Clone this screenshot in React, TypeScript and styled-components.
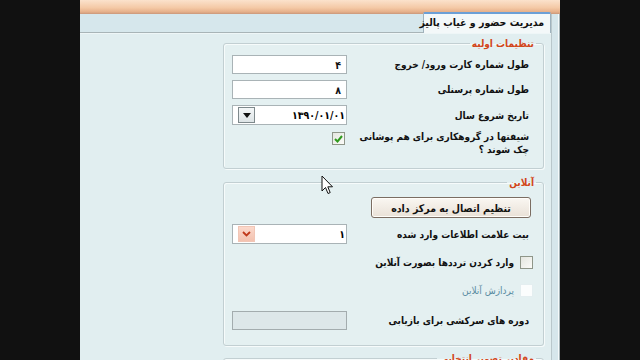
import React from 'react';
import styled, { createGlobalStyle } from 'styled-components';

const GlobalStyle = createGlobalStyle`
  html, body {
    margin: 0;
    padding: 0;
    background: #111;
  }
  * {
    box-sizing: border-box;
  }
`;

const FONT = `"DejaVu Sans Condensed", "DejaVu Sans", sans-serif`;

const Screen = styled.div`
  width: 640px;
  height: 360px;
  display: flex;
  justify-content: center;
  background: #111;
  overflow: hidden;
`;

const Window = styled.div`
  position: relative;
  width: 480px;
  height: 360px;
  display: flex;
  flex-direction: column;
  background: #e1eef0;
  font-family: ${FONT};
  overflow: hidden;
`;

const TitleBar = styled.div`
  height: 14px;
  flex: none;
  background: linear-gradient(#fbe2cc 0%, #f4c9a6 55%, #e6b08a 85%, #c9977a 100%);
`;

const Body = styled.div`
  flex: 1;
  display: flex;
  direction: rtl;
  min-height: 0;
`;

const RightEdge = styled.div`
  width: 9px;
  flex: none;
  background: #d6e6eb;
  border-right: 1px solid #a6b3b7;
  border-left: 1px solid #b9c7cb;
  box-shadow: inset -1px 0 0 #f4f9fa;
`;

const Main = styled.div`
  flex: 1;
  display: flex;
  flex-direction: column;
  min-width: 0;
`;

const TabStrip = styled.div`
  height: 19px;
  flex: none;
  display: flex;
  align-items: flex-end;
  background: #d6e7ec;
  border-bottom: 1px solid #a8b4b7;
  box-shadow: 0 1px 0 #eef6f7;
`;

const Tab = styled.div`
  width: 128px;
  height: 21px;
  margin-bottom: -1px;
  background: #f3f8f9;
  border: 1px solid #9fb2bd;
  border-top: 2px solid #6b9fd6;
  border-bottom: none;
  border-radius: 2px 2px 0 0;
  font-size: 10.5px;
  font-weight: bold;
  color: #111;
  padding: 2px 6px 0 0;
  white-space: nowrap;
`;

const Content = styled.div`
  flex: 1;
  display: flex;
  flex-direction: column;
  align-items: flex-start;
  padding: 4px 7px 0 0;
`;

const Group = styled.fieldset<{ $top?: number; $bottom?: number }>`
  width: 321px;
  min-width: 0;
  margin: ${(p) => p.$top ?? 0}px 0 0 0;
  padding: 0 14px ${(p) => p.$bottom ?? 12}px 8px;
  border: 1px solid #c2cfd2;
  border-radius: 3px;
  box-shadow: inset 1px 1px 0 #f6fbfb, 1px 1px 0 #f6fbfb;
  background: #e4f0f1;
  flex: none;
`;

const Legend = styled.legend`
  margin-right: -7px;
  padding: 0 2px;
  font-size: 10px;
  font-weight: bold;
  line-height: 13px;
  color: #d2461a;
`;

const Row = styled.div<{ $top?: number; $align?: string }>`
  display: grid;
  grid-template-columns: minmax(0, 1fr) 115px;
  align-items: ${(p) => p.$align ?? 'center'};
  margin-top: ${(p) => p.$top ?? 0}px;
`;

const Label = styled.div<{ $muted?: boolean }>`
  font-size: 10px;
  font-weight: ${(p) => (p.$muted ? 'normal' : 'bold')};
  line-height: 13px;
  color: ${(p) => (p.$muted ? '#5b8ca2' : '#111')};
  text-align: right;
  white-space: nowrap;
`;

const TextBox = styled.div<{ $disabled?: boolean }>`
  height: 19px;
  border: 1px solid ${(p) => (p.$disabled ? '#a3acae' : '#a9b3b6')};
  background: ${(p) => (p.$disabled ? '#dde7e9' : '#fff')};
  font-size: 10.5px;
  font-weight: bold;
  color: #111;
  display: flex;
  align-items: center;
  padding: 0 5px;
  direction: rtl;
`;

const Combo = styled.div`
  height: 20px;
  border: 1px solid #a9b3b6;
  background: #fff;
  display: flex;
  align-items: center;
  justify-content: space-between;
  padding: 0 1px 0 5px;
  direction: rtl;
  font-size: 10.5px;
  font-weight: bold;
`;

const DropButton = styled.div<{ $tone: 'grey' | 'pink' }>`
  width: 17px;
  height: 16px;
  display: flex;
  align-items: center;
  justify-content: center;
  border: 1px solid ${(p) => (p.$tone === 'grey' ? '#7e898c' : '#f1c6b6')};
  background: ${(p) => (p.$tone === 'grey' ? 'linear-gradient(#f4f7f8, #dde4e6)' : 'linear-gradient(#fbd9cc, #f3c2b0)')};
`;

const Check = styled.div<{ $muted?: boolean }>`
  width: 13px;
  height: 13px;
  flex: none;
  border: 1px solid ${(p) => (p.$muted ? '#e4eef0' : '#8f9689')};
  background: ${(p) => (p.$muted ? '#fbfdfd' : 'linear-gradient(135deg, #e4e6e0, #fbfbf8)')};
  display: flex;
  align-items: center;
  justify-content: center;
`;

const CheckCell = styled.div`
  display: flex;
  justify-content: flex-start;
  padding: 2px 2px 0 0;
`;

const CheckLine = styled.div<{ $top: number }>`
  display: flex;
  align-items: center;
  gap: 6px;
  margin-top: ${(p) => p.$top}px;
  margin-right: -4px;
`;

const ActionButton = styled.button`
  width: 160px;
  height: 21px;
  margin-right: -2px;
  justify-self: start;
  border: 1px solid #7b6d62;
  border-radius: 3px;
  background: linear-gradient(#faf7f2, #e9e1d7);
  box-shadow: inset 0 0 0 1px #fffdf9;
  font-family: ${FONT};
  font-size: 10.5px;
  font-weight: bold;
  color: #111;
  direction: rtl;
  padding: 0;
`;

const Cursor = styled.svg`
  position: absolute;
  left: 241px;
  top: 175px;
`;

export default function App() {
  return (
    <>
      <GlobalStyle />
      <Screen>
        <Window>
          <TitleBar />
          <Body>
            <RightEdge />
            <Main>
              <TabStrip>
                <Tab>مدیریت حضور و غیاب پالیز</Tab>
              </TabStrip>
              <Content>
                <Group $bottom={12}>
                  <Legend>تنظیمات اولیه</Legend>
                  <Row $top={5}>
                    <Label>طول شماره کارت ورود/ خروج</Label>
                    <TextBox>۴</TextBox>
                  </Row>
                  <Row $top={6}>
                    <Label>طول شماره پرسنلی</Label>
                    <TextBox>۸</TextBox>
                  </Row>
                  <Row $top={6}>
                    <Label>تاریخ شروع سال</Label>
                    <Combo>
                      <span>۱۳۹۰/۰۱/۰۱</span>
                      <DropButton $tone="grey">
                        <svg width="8" height="5" viewBox="0 0 8 5">
                          <path d="M0 0 L8 0 L4 5 Z" fill="#111" />
                        </svg>
                      </DropButton>
                    </Combo>
                  </Row>
                  <Row $top={5} $align="start">
                    <Label>
                      شیفتها در گروهکاری برای هم پوشانی
                      <br />
                      چک شوند ؟
                    </Label>
                    <CheckCell>
                      <Check>
                        <svg width="9" height="8" viewBox="0 0 9 8">
                          <path d="M1 4 L3.5 6.5 L8 1" fill="none" stroke="#2f9a1e" strokeWidth="2" />
                        </svg>
                      </Check>
                    </CheckCell>
                  </Row>
                </Group>

                <Group $top={7} $bottom={15}>
                  <Legend>آنلاین</Legend>
                  <Row $top={8}>
                    <ActionButton>تنظیم اتصال به مرکز داده</ActionButton>
                    <span />
                  </Row>
                  <Row $top={6}>
                    <Label>بیت علامت اطلاعات وارد شده</Label>
                    <Combo>
                      <span>۱</span>
                      <DropButton $tone="pink">
                        <svg width="9" height="6" viewBox="0 0 9 6">
                          <path d="M1 1 L4.5 4.5 L8 1" fill="none" stroke="#c0391b" strokeWidth="1.8" />
                        </svg>
                      </DropButton>
                    </Combo>
                  </Row>
                  <CheckLine $top={12}>
                    <Check />
                    <Label>وارد کردن ترددها بصورت آنلاین</Label>
                  </CheckLine>
                  <CheckLine $top={15}>
                    <Check $muted />
                    <Label $muted>پردازش آنلاین</Label>
                  </CheckLine>
                  <Row $top={14}>
                    <Label>دوره های سرکشی برای بازیابی</Label>
                    <TextBox $disabled />
                  </Row>
                </Group>

                <Group $top={6}>
                  <Legend>مقادیر تصویر انتخابی</Legend>
                </Group>
              </Content>
            </Main>
          </Body>
          <Cursor width="13" height="20" viewBox="0 0 13 20">
            <path d="M1 1 L1 16 L4.5 12.5 L7 18.5 L9.2 17.6 L6.8 11.8 L11.5 11.8 Z" fill="#fff" stroke="#111" strokeWidth="1" strokeLinejoin="round" />
          </Cursor>
        </Window>
      </Screen>
    </>
  );
}
